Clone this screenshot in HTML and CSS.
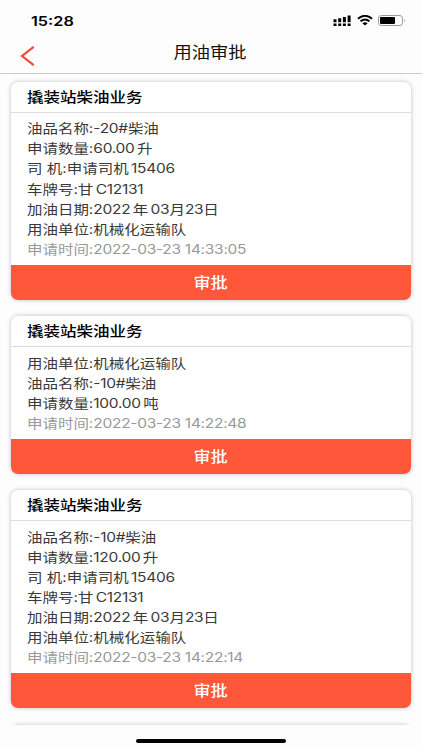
FILE: index.html
```
<!DOCTYPE html>
<html lang="zh-CN">

<head>
    <meta charset="UTF-8">
    <meta name="viewport" content="width=device-width, initial-scale=1.0">
    <title>用油审批</title>
    <link rel="stylesheet" href="styles.css">
</head>

<body>
    <div class="status-bar">
        <span class="time">15:28</span>
        <div class="status-icons">
            <svg class="signal" width="18" height="12" viewBox="0 0 18 12">
                <path d="M0.5 4.3h3v3h-3zM5.2 3.3h3v4h-3zM9.9 2h3v5.3h-3zM14.6 0.6h3v6.7h-3zM0.5 8.6h3v2.4h-3zM5.2 8.6h3v2.4h-3zM9.9 8.6h3v2.4h-3zM14.6 8.6h3v2.4h-3z"/>
            </svg>
            <svg class="wifi" width="16" height="11" viewBox="0 0 16 11">
                <path d="M0.9 3.8Q8-2.2 15.1 3.8M3.5 6.3Q8 2.6 12.5 6.3" fill="none" stroke="#000" stroke-width="1.9"/>
                <path d="M5.4 8.2Q8 6.3 10.6 8.2L8 10.5z"/>
            </svg>
            <svg class="battery" width="28" height="11" viewBox="0 0 28 11">
                <rect x="0.5" y="0.5" width="24" height="10" rx="2.8" fill="none" stroke="#999"/>
                <rect x="2" y="2" width="15" height="7" rx="1"/>
                <path d="M26 4q1.5 1.5 0 3z" fill="#777"/>
            </svg>
        </div>
    </div>

    <div class="nav">
        <svg class="back" width="16" height="22" viewBox="0 0 16 22">
            <path d="M13.7 1.8L2 11l11.7 9.2" fill="none" stroke="#ef4a35" stroke-width="2.2"/>
        </svg>
        <h1><span>用油审批</span></h1>
    </div>

    <div class="list">
        <div class="card">
            <h2><span>撬装站柴油业务</span></h2>
            <div class="info">
                <p>油品名称:<span class="num">-20#</span>柴油</p>
                <p>申请数量:<span class="num">60.00</span><i></i>升</p>
                <p>司 机:申请司机<i></i><span class="num">15406</span></p>
                <p>车牌号:甘<i></i><span class="num">C12131</span></p>
                <p>加油日期:<span class="num">2022</span><i></i>年<i></i><span class="num">03</span>月<span class="num">23</span>日</p>
                <p>用油单位:机械化运输队</p>
                <p class="apply-time">申请时间:<span class="num">2022-03-23 14:33:05</span></p>
            </div>
            <button type="button"><span>审批</span></button>
        </div>

        <div class="card">
            <h2><span>撬装站柴油业务</span></h2>
            <div class="info">
                <p>用油单位:机械化运输队</p>
                <p>油品名称:<span class="num">-10#</span>柴油</p>
                <p>申请数量:<span class="num">100.00</span><i></i>吨</p>
                <p class="apply-time">申请时间:<span class="num">2022-03-23 14:22:48</span></p>
            </div>
            <button type="button"><span>审批</span></button>
        </div>

        <div class="card">
            <h2><span>撬装站柴油业务</span></h2>
            <div class="info">
                <p>油品名称:<span class="num">-10#</span>柴油</p>
                <p>申请数量:<span class="num">120.00</span><i></i>升</p>
                <p>司 机:申请司机<i></i><span class="num">15406</span></p>
                <p>车牌号:甘<i></i><span class="num">C12131</span></p>
                <p>加油日期:<span class="num">2022</span><i></i>年<i></i><span class="num">03</span>月<span class="num">23</span>日</p>
                <p>用油单位:机械化运输队</p>
                <p class="apply-time">申请时间:<span class="num">2022-03-23 14:22:14</span></p>
            </div>
            <button type="button"><span>审批</span></button>
        </div>

        <div class="card"></div>
    </div>

    <div class="home-area">
        <div class="home-bar"></div>
    </div>
</body>

</html>
```
FILE: styles.css
```
* {
    box-sizing: border-box;
}

body {
    margin: 0;
    height: 750px;
    display: flex;
    flex-direction: column;
    overflow: hidden;
    background-color: #fdfdfd;
    font-family: Inter, "Noto Sans CJK SC", sans-serif;
    color: #3a3a3a;
}

.status-bar {
    display: flex;
    justify-content: space-between;
    height: 36px;
    padding: 13px 16px 0 31px;
}

.time {
    font-size: 13px;
    line-height: 16px;
    font-weight: 600;
    color: #000;
    transform: scaleX(1.25);
    transform-origin: left;
}

.status-icons {
    display: flex;
    align-items: flex-start;
    padding-top: 2px;
}

.signal {
    margin-right: 6px;
}

.wifi {
    margin-right: 5px;
}

.nav {
    display: flex;
    height: 38px;
    flex-shrink: 0;
    border-bottom: 1px solid #ccc;
}

.back {
    margin: 9px 0 0 20px;
}

h1 {
    flex: 1;
    margin: 0 37px 0 0;
    font-size: 15.5px;
    font-weight: 400;
    line-height: 33px;
    text-align: center;
    color: #111;
}

h1 span,
h2 span,
button span {
    display: inline-block;
    transform: scaleX(1.18);
}

.list {
    flex: 1;
    min-height: 0;
    overflow: hidden;
    padding: 8.2px 11px 0 10.5px;
}

.card {
    min-height: 40px;
    margin-bottom: 16.5px;
    border-radius: 7px;
    background-color: #fff;
    box-shadow: 0 0 4px rgba(0, 0, 0, 0.25);
    overflow: hidden;
}

h2 {
    height: 31px;
    margin: 0;
    padding-left: 16px;
    border-bottom: 1px solid #ddd;
    font-size: 14px;
    font-weight: 500;
    line-height: 30px;
    color: #000;
}

h2 span {
    transform-origin: left;
}

.info {
    padding: 6.1px 0 5px 16.5px;
}

.info p {
    width: 300px;
    margin: 0;
    font-size: 12.9px;
    line-height: 20.1px;
    white-space: nowrap;
    transform: scaleX(1.2);
    transform-origin: left;
}

.info .num {
    letter-spacing: -0.22px;
}

.info i {
    display: inline-block;
    width: 2px;
}

.info .apply-time {
    color: #999;
}

button {
    display: block;
    width: 100%;
    height: 35px;
    padding: 0 1px 0 0;
    border: none;
    background-color: #ff573a;
    color: #fff;
    font-family: inherit;
    font-size: 14.5px;
    font-weight: 500;
    line-height: 35px;
}

.home-area {
    height: 25px;
    padding-top: 14px;
}

.home-bar {
    width: 150px;
    height: 4px;
    margin: 0 auto;
    border-radius: 2px;
    background-color: #000;
}
```
